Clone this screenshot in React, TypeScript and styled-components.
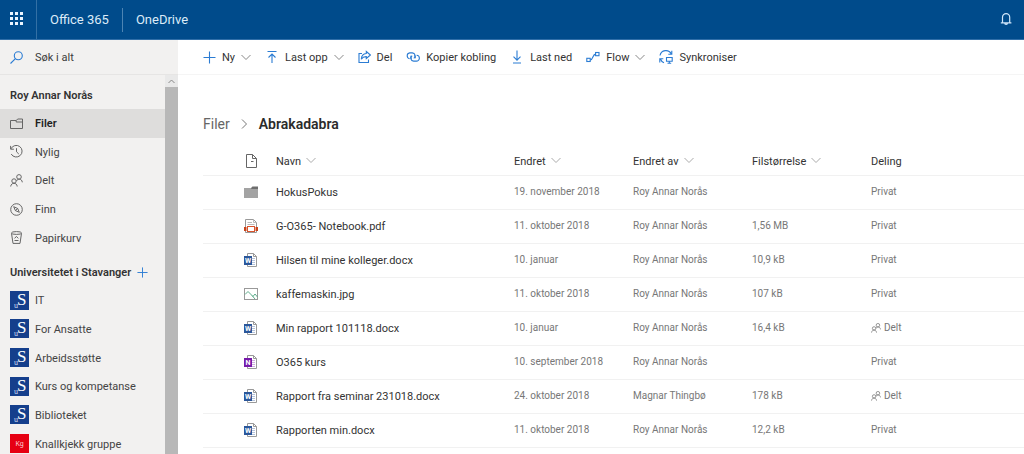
import React from "react";
import styled, { createGlobalStyle } from "styled-components";

const GlobalStyle = createGlobalStyle`
  *, *::before, *::after { box-sizing: border-box; }
  body {
    margin: 0;
    background: #fff;
    color: #333;
    font-family: Roboto, "Open Sans", sans-serif;
    font-size: 11px;
    line-height: 16px;
  }
  button, input { font: inherit; color: inherit; }
  button { border: 0; padding: 0; background: none; cursor: pointer; }
  a { color: inherit; text-decoration: none; }
  ul, ol { list-style: none; margin: 0; padding: 0; }
  svg { display: block; flex: none; }
`;

const Page = styled.div`
  display: flex;
  flex-direction: column;
  height: 100vh;
  overflow: hidden;
`;

const SuiteBar = styled.header`
  display: flex;
  align-items: center;
  flex: none;
  height: 40px;
  background: #004b8b;
  border-bottom: 1px solid #2f6ea8;
  color: #dcebf8;
  font-size: 13px;
`;

const WaffleButton = styled.button`
  display: flex;
  align-items: center;
  align-self: stretch;
  width: 37px;
  padding: 0 0 2px 10px;
  border-right: 1px solid #3370a5;
`;

const SuiteLink = styled.a`
  padding: 0 13px;
  line-height: 24px;
  & + & { border-left: 1px solid #4d84b3; }
`;

const BellButton = styled.button`
  margin-left: auto;
  margin-right: 12px;
  padding-bottom: 2px;
`;

const Body = styled.div`
  display: flex;
  flex: 1;
  min-height: 0;
`;

const Sidebar = styled.aside`
  display: flex;
  flex-direction: column;
  flex: none;
  width: 178px;
  background: #f2f1f0;
`;

const SearchBox = styled.label`
  display: flex;
  align-items: center;
  gap: 12px;
  flex: none;
  height: 35px;
  padding-left: 10px;
  border-bottom: 1px solid #e6e5e4;
`;

const SearchInput = styled.input`
  width: 120px;
  border: 0;
  padding: 2px 0 0;
  background: none;
  outline: none;
  &::placeholder { color: #3c3c3c; opacity: 1; }
`;

const SidebarScroll = styled.div`
  display: flex;
  flex: 1;
  min-height: 0;
`;

const Nav = styled.nav`
  flex: 1;
  min-width: 0;
  overflow: hidden;
`;

const NavHeading = styled.h2`
  display: flex;
  align-items: center;
  gap: 6px;
  height: 34px;
  margin: 0;
  padding: 7px 0 0 10px;
  font-size: 11px;
  font-weight: 600;
  white-space: nowrap;
`;

const NavList = styled.ul<{ $height: number }>`
  display: grid;
  grid-auto-rows: 1fr;
  min-height: ${(p) => p.$height}px;
`;

const NavLink = styled.a<{ $active?: boolean }>`
  display: flex;
  align-items: center;
  height: 100%;
  padding-left: 10px;
  background: ${(p) => (p.$active ? "#dedddc" : "transparent")};
  color: ${(p) => (p.$active ? "#222" : "#444")};
  font-weight: ${(p) => (p.$active ? 600 : 400)};
`;

const NavIcon = styled.span`
  width: 25px;
  color: #666;
`;

const Label = styled.span`
  padding-top: 2px;
`;

const ScrollTrack = styled.div`
  display: flex;
  flex-direction: column;
  width: 13px;
  background: #f0f0f0;
`;

const ScrollArrow = styled.div`
  display: grid;
  place-items: center;
  height: 12px;
  background: #e9e9e9;
`;

const ScrollThumb = styled.div`
  flex: 1;
  background: #b8b8b8;
`;

const Main = styled.main`
  flex: 1;
  min-width: 0;
`;

const CommandBar = styled.div`
  display: flex;
  align-items: center;
  gap: 14px;
  height: 35px;
  padding-left: 25px;
  border-bottom: 1px solid #f5f5f5;
`;

const Command = styled.button`
  display: flex;
  align-items: center;
  gap: 6px;
  white-space: nowrap;
`;

const Content = styled.div`
  padding: 38px 0 0 25px;
`;

const Breadcrumb = styled.ol`
  display: flex;
  align-items: center;
  gap: 11px;
  color: #666;
  font-size: 14px;
  line-height: 22px;
`;

const CurrentCrumb = styled.li`
  color: #2b2b2b;
  font-weight: 600;
`;

const FileTable = styled.table`
  width: 100%;
  margin-top: 12px;
  border-collapse: collapse;
  table-layout: fixed;
`;

const Row = styled.tr<{ $head?: boolean }>`
  height: ${(p) => (p.$head ? 28 : 34)}px;
  border-bottom: 1px solid #f1f1f1;
`;

const HeadCell = styled.th`
  padding: 0;
  text-align: left;
  font-weight: 400;
`;

const SortButton = styled.button`
  display: flex;
  align-items: center;
  gap: 5px;
  white-space: nowrap;
`;

const IconCell = styled.td`
  padding: 0;
`;

const NameCell = styled.td`
  padding: 2px 0 0;
  white-space: nowrap;
`;

const MetaCell = styled.td`
  padding: 0;
  color: #777;
  font-size: 10px;
  white-space: nowrap;
`;

const Shared = styled.span`
  display: flex;
  align-items: center;
  gap: 3px;
`;

const line = { fill: "none", stroke: "currentColor", strokeWidth: 1 } as const;
const blue = { fill: "none", stroke: "#2b7cd3", strokeWidth: 1.1 } as const;

const Waffle = () => (
  <svg width="13" height="13" fill="#eaf5ff">
    {[0, 5, 10].map((y) => [0, 5, 10].map((x) => <rect key={`${x}-${y}`} x={x} y={y} width="3" height="3" />))}
  </svg>
);

const Bell = () => (
  <svg width="12" height="14" fill="none" stroke="#cfe6fa" strokeWidth="1.2">
    <path d="M2.500 10.500V5.200a3.600 3.600 0 0 1 7.200 0v5.300M.8 10.800h10.600M4.700 11a1.400 1.400 0 0 0 2.800 0" />
  </svg>
);

const SearchIcon = () => (
  <svg width="13" height="13" {...blue}>
    <circle cx="8.300" cy="4.700" r="4" />
    <path d="M5.400 7.600.5 12.500" />
  </svg>
);

const Chevron = ({ color = "#888" }: { color?: string }) => (
  <svg width="10" height="7" fill="none" stroke={color}>
    <path d="M.5 1 5 5.500 9.500 1" />
  </svg>
);

const CrumbChevron = () => (
  <svg width="7" height="10" fill="none" stroke="#777">
    <path d="M1 .5 5.500 5 1 9.500" />
  </svg>
);

const UpArrow = () => (
  <svg width="7" height="5" fill="none" stroke="#888">
    <path d="M.5 4 3.500 1l3 3" />
  </svg>
);

const PlusIcon = ({ size }: { size: number }) => (
  <svg width={size} height={size} viewBox="0 0 13 13" {...blue}>
    <path d="M6.500.5v12M.5 6.500h12" />
  </svg>
);

const UploadIcon = () => (
  <svg width="14" height="14" {...blue}>
    <path d="M2.500 1.500h9M7 13V4M3.500 7.500 7 4l3.500 3.500" />
  </svg>
);

const ShareIcon = () => (
  <svg width="13" height="14" {...blue}>
    <path d="M4 3.500H1v9h9.500v-3" />
    <path d="M8.300 1.500 12.400 5 8.300 8.500V6.600C6 6.500 4.500 7.300 3.300 9.200 3.500 6 5.300 3.700 8.300 3.500Z" />
  </svg>
);

const LinkIcon = () => (
  <svg width="14" height="14" {...blue}>
    <path d="M3.600 8.800A3 3 0 0 1 3.700 2.900h2.600a3 3 0 0 1 1.500 5.500M5.700 8.700a2.500 2.500 0 0 1-.6-3" />
    <path d="M10.600 5.300a2.900 2.900 0 0 1-.3 5.800H7.600a2.900 2.900 0 0 1-1.400-5.400M8.400 5.300a2.500 2.500 0 0 1 .6 3" />
  </svg>
);

const DownloadIcon = () => (
  <svg width="14" height="14" {...blue}>
    <path d="M3 13h8M7 .5V10M3.500 6.700 7 10.200l3.500-3.500" />
  </svg>
);

const FlowIcon = () => (
  <svg width="14" height="14" {...blue}>
    <rect x=".8" y="8.300" width="3.400" height="3.200" />
    <rect x="9.600" y="2.500" width="3.400" height="3.200" />
    <path d="M4.200 10c3.200 0 2.200-5.900 5.400-5.900" />
  </svg>
);

const SyncIcon = () => (
  <svg width="14" height="14" {...blue}>
    <path d="M1 5.500A6 6 0 0 1 12.300 4M12.800.8v3.500H9.300M5 12.800A6 6 0 0 1 1.500 9M.8 12.500V8.800h3.500" />
    <path d="M7.500 7.500h5.700v3.800H7.500zM10.300 11.300v2M8.500 13.300h3.700" />
  </svg>
);

const FolderLine = () => (
  <svg width="13" height="13" {...line}>
    <path d="M.5 11.500v-8h5.700l1.500-1.500h4.800v9.500zM6.200 3.500v1.500h6.300" />
  </svg>
);

const RecentIcon = () => (
  <svg width="13" height="13" {...line}>
    <path d="M1 3.800A5.800 5.800 0 1 1 1.200 9M.6.9v3.300h3.300M6.500 3.200v3.600l2.300 2.200" />
  </svg>
);

const PeopleIcon = ({ size = 13 }: { size?: number }) => (
  <svg width={size} height={size} viewBox="0 0 13 13" {...line}>
    <circle cx="9" cy="2.900" r="2.300" />
    <path d="M6.500 7C7.300 4.500 12 4.300 12.300 8.300" />
    <circle cx="4" cy="7" r="2.200" />
    <path d="M.7 12.500C1 8.200 7 8.200 7.200 12.500" />
  </svg>
);

const CompassIcon = () => (
  <svg width="13" height="13" {...line}>
    <circle cx="6.500" cy="6.500" r="5.800" />
    <path d="M3.700 3.700 7.700 5.500 9.300 9.300 5.400 7.600ZM5.400 7.600l2.300-2.100" />
  </svg>
);

const BinIcon = () => (
  <svg width="13" height="13" {...line}>
    <ellipse cx="6.500" cy="2" rx="5" ry="1.400" />
    <path d="M1.500 2.300 3 12.400h7l1.500-10.100M4.600 7.400l1.800-2 1.900 2M4.500 9.500h4" />
  </svg>
);

const SiteLogo = () => (
  <svg width="19" height="19">
    <rect width="19" height="19" fill="#153f8c" />
    <text x="7" y="14" fill="#fff" fontFamily="Liberation Serif, serif" fontSize="17">S</text>
    <text x="4" y="17" fill="#cddcf2" fontFamily="Liberation Serif, serif" fontSize="8">u</text>
  </svg>
);

const GroupLogo = () => (
  <svg width="19" height="19">
    <rect width="19" height="19" fill="#e60012" />
    <text x="9.500" y="12" fill="#fbd0d4" textAnchor="middle" fontSize="7">Kg</text>
  </svg>
);

const DocHeaderIcon = () => (
  <svg width="16" height="14" fill="none" stroke="#666">
    <path d="M3.500.5h6l4 4v9h-10zM9.500.5v4h4M8 7.500h2.500" />
  </svg>
);

const FolderIcon = () => (
  <svg width="16" height="14">
    <path d="M1 3h7l1-1h6v11H1z" fill="#a3a3a3" />
    <path d="M8 4 9.300 1.500H15V4z" fill="#6e6e6e" />
  </svg>
);

const PdfIcon = () => (
  <svg width="16" height="16">
    <path d="M2.500 14.500V1.500h8l3 3v10z" fill="#fff" stroke="#999" />
    <path d="M10.500 1.500v3h3M4.500 4.500H9M4.500 6.500h7" fill="none" stroke="#bbb" />
    <path d="M1 9h2.500v4H1zM12.500 9H15v4h-2.500z" fill="#c8441b" />
    <rect x="4.500" y="8.500" width="7" height="5" fill="#fff" stroke="#d9532c" />
  </svg>
);

const OfficeIcon = ({ letter, color }: { letter: string; color: string }) => (
  <svg width="16" height="16">
    <path d="M4.500 1.500h6l3 3v10h-9z" fill="#fff" stroke="#999" />
    <path d="M10.500 1.500v3h3" fill="none" stroke="#999" />
    <path d="M9 6.500h3M9 8.500h3M9 10.500h3M9 12.500h3" stroke={color} strokeOpacity=".35" />
    <rect x="1" y="4" width="8" height="9" fill={color} />
    <text x="5" y="11" fill="#fff" textAnchor="middle" fontSize="7" fontWeight="700">{letter}</text>
  </svg>
);

const ImageIcon = () => (
  <svg width="16" height="16" fill="none">
    <rect x="1.500" y="2.500" width="13" height="11" stroke="#999" />
    <path d="M2 8.500 5 5.500l5 5 2-2.500 2.500 3M9 9.500l3 3.500" stroke="#5fae8d" />
  </svg>
);

const commands = [
  { label: "Ny", icon: <PlusIcon size={13} />, menu: true },
  { label: "Last opp", icon: <UploadIcon />, menu: true },
  { label: "Del", icon: <ShareIcon /> },
  { label: "Kopier kobling", icon: <LinkIcon /> },
  { label: "Last ned", icon: <DownloadIcon /> },
  { label: "Flow", icon: <FlowIcon />, menu: true },
  { label: "Synkroniser", icon: <SyncIcon /> },
];

const places = [
  { label: "Filer", icon: <FolderLine />, active: true },
  { label: "Nylig", icon: <RecentIcon /> },
  { label: "Delt", icon: <PeopleIcon /> },
  { label: "Finn", icon: <CompassIcon /> },
  { label: "Papirkurv", icon: <BinIcon /> },
];

const sites = ["IT", "For Ansatte", "Arbeidsstøtte", "Kurs og kompetanse", "Biblioteket", "Knallkjekk gruppe"];

const word = <OfficeIcon letter="W" color="#2b579a" />;
const files = [
  { icon: <FolderIcon />, name: "HokusPokus", date: "19. november 2018", by: "Roy Annar Norås", size: "" },
  { icon: <PdfIcon />, name: "G-O365- Notebook.pdf", date: "11. oktober 2018", by: "Roy Annar Norås", size: "1,56 MB" },
  { icon: word, name: "Hilsen til mine kolleger.docx", date: "10. januar", by: "Roy Annar Norås", size: "10,9 kB" },
  { icon: <ImageIcon />, name: "kaffemaskin.jpg", date: "11. oktober 2018", by: "Roy Annar Norås", size: "107 kB" },
  { icon: word, name: "Min rapport 101118.docx", date: "10. januar", by: "Roy Annar Norås", size: "16,4 kB", shared: true },
  { icon: <OfficeIcon letter="N" color="#7719aa" />, name: "O365 kurs", date: "10. september 2018", by: "Roy Annar Norås", size: "" },
  { icon: word, name: "Rapport fra seminar 231018.docx", date: "24. oktober 2018", by: "Magnar Thingbø", size: "178 kB", shared: true },
  { icon: word, name: "Rapporten min.docx", date: "11. oktober 2018", by: "Roy Annar Norås", size: "12,2 kB" },
];

export default function App() {
  return (
    <Page>
      <GlobalStyle />
      <SuiteBar>
        <WaffleButton aria-label="Appstarter"><Waffle /></WaffleButton>
        <SuiteLink href="#">Office 365</SuiteLink>
        <SuiteLink href="#">OneDrive</SuiteLink>
        <BellButton aria-label="Varsler"><Bell /></BellButton>
      </SuiteBar>
      <Body>
        <Sidebar>
          <SearchBox>
            <SearchIcon />
            <SearchInput type="text" placeholder="Søk i alt" aria-label="Søk i alt" />
          </SearchBox>
          <SidebarScroll>
            <Nav>
              <NavHeading>Roy Annar Norås</NavHeading>
              <NavList $height={143}>
                {places.map((p) => (
                  <li key={p.label}>
                    <NavLink href="#" $active={p.active}><NavIcon>{p.icon}</NavIcon><Label>{p.label}</Label></NavLink>
                  </li>
                ))}
              </NavList>
              <NavHeading>
                Universitetet i Stavanger
                <button aria-label="Nytt område"><PlusIcon size={11} /></button>
              </NavHeading>
              <NavList $height={172}>
                {sites.map((s, i) => (
                  <li key={s}>
                    <NavLink href="#"><NavIcon>{i < 5 ? <SiteLogo /> : <GroupLogo />}</NavIcon><Label>{s}</Label></NavLink>
                  </li>
                ))}
              </NavList>
            </Nav>
            <ScrollTrack aria-hidden="true">
              <ScrollArrow><UpArrow /></ScrollArrow>
              <ScrollThumb />
            </ScrollTrack>
          </SidebarScroll>
        </Sidebar>
        <Main>
          <CommandBar>
            {commands.map((c) => (
              <Command key={c.label}>
                {c.icon}
                <Label>{c.label}</Label>
                {c.menu && <Chevron />}
              </Command>
            ))}
          </CommandBar>
          <Content>
            <Breadcrumb>
              <li><a href="#">Filer</a></li>
              <li aria-hidden="true"><CrumbChevron /></li>
              <CurrentCrumb>Abrakadabra</CurrentCrumb>
            </Breadcrumb>
            <FileTable>
              <colgroup>
                <col style={{ width: 40 }} />
                <col style={{ width: 33 }} />
                <col style={{ width: 238 }} />
                <col style={{ width: 119 }} />
                <col style={{ width: 119 }} />
                <col style={{ width: 119 }} />
                <col />
              </colgroup>
              <thead>
                <Row $head>
                  <HeadCell />
                  <HeadCell><DocHeaderIcon /></HeadCell>
                  {["Navn", "Endret", "Endret av", "Filstørrelse"].map((h) => (
                    <HeadCell key={h}><SortButton><Label>{h}</Label><Chevron color="#aaa" /></SortButton></HeadCell>
                  ))}
                  <HeadCell><SortButton><Label>Deling</Label></SortButton></HeadCell>
                </Row>
              </thead>
              <tbody>
                {files.map((f) => (
                  <Row key={f.name}>
                    <IconCell />
                    <IconCell>{f.icon}</IconCell>
                    <NameCell><a href="#">{f.name}</a></NameCell>
                    <MetaCell>{f.date}</MetaCell>
                    <MetaCell>{f.by}</MetaCell>
                    <MetaCell>{f.size}</MetaCell>
                    <MetaCell>{f.shared ? <Shared><PeopleIcon size={10} />Delt</Shared> : "Privat"}</MetaCell>
                  </Row>
                ))}
              </tbody>
            </FileTable>
          </Content>
        </Main>
      </Body>
    </Page>
  );
}
